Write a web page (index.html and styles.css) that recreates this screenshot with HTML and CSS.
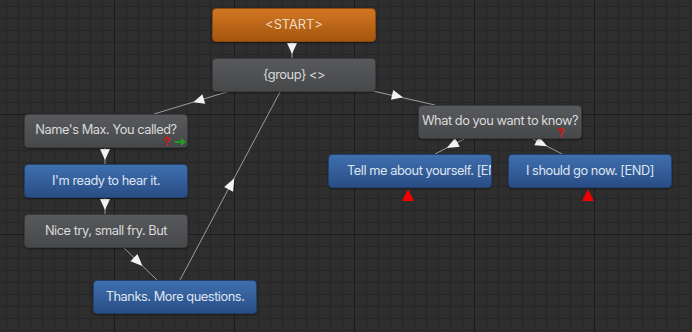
FILE: index.html
```html
<!DOCTYPE html>
<html>

<head>
     <title> Dialogue Graph </title>
     <link rel="stylesheet" href="styles.css">
</head>

<body>
     <div class="canvas">

          <!-- links between nodes, drawn under the nodes -->
          <svg class="links" width="692" height="332">
               <g class="wire">
                    <line x1="292" y1="42" x2="292" y2="58" />
                    <line x1="230" y1="91" x2="154" y2="114" />
                    <line x1="373" y1="91" x2="435" y2="105" />
                    <line x1="180" y1="280" x2="280" y2="92" />
                    <line x1="105" y1="148" x2="105" y2="164" />
                    <line x1="105" y1="198" x2="105" y2="214" />
                    <line x1="124" y1="248" x2="157" y2="280" />
                    <line x1="464" y1="139" x2="435" y2="154" />
                    <line x1="533" y1="139" x2="562" y2="154" />
               </g>
               <g class="arrow">
                    <polygon points="287,43 297,43 292,54" />
                    <polygon points="193.3,102.2 205.2,103.8 202.4,94.3" />
                    <polygon points="402.9,97.3 391,99.8 393.2,90" />
                    <polygon points="234.3,178.3 233.1,191.8 224.2,187.1" />
                    <polygon points="100,149 110,149 105,160" />
                    <polygon points="100,199 110,199 105,210" />
                    <polygon points="142.5,265.9 137.4,254 130.4,261.2" />
                    <polygon points="446.8,147.9 459.7,146.8 455.1,138" />
                    <polygon points="547.2,146.3 534.3,145.2 538.9,136.4" />
               </g>
               <g class="alert">
                    <polygon points="402,201 414,201 408,189" />
                    <polygon points="582,201 594,201 588,189" />
               </g>
          </svg>

          <div class="node start" style="left: 212px; top: 8px;">&lt;START&gt;</div>
          <div class="node group" style="left: 212px; top: 58px;">{group} &lt;&gt;</div>

          <div class="node npc marked" style="left: 24px; top: 114px;">
               Name's Max. You called?
               <span class="marks">
                    <span class="ask">?</span>
                    <svg class="go" width="11" height="8" viewBox="0 0 11 8">
                         <path d="M0 3h6V0l5 4-5 4V5H0z" />
                    </svg>
               </span>
          </div>
          <div class="node pc" style="left: 24px; top: 164px;">I'm ready to hear it.</div>
          <div class="node npc" style="left: 24px; top: 214px;">Nice try, small fry. But</div>
          <div class="node pc" style="left: 93px; top: 280px;">Thanks. More questions.</div>

          <div class="node npc marked" style="left: 418px; top: 105px;">
               What do you want to know?
               <span class="marks">
                    <span class="ask">?</span>
               </span>
          </div>
          <div class="node pc clip" style="left: 328px; top: 154px;">Tell me about yourself. [END]</div>
          <div class="node pc" style="left: 508px; top: 154px;">I should go now. [END]</div>

     </div>
</body>

</html>
```

FILE: styles.css
```css
body {
     margin: 0;
     background-color: #2d2d2d;
}

.canvas {
     position: relative;
     width: 692px;
     height: 332px;
     overflow: hidden;
     background-color: #2e2e2e;
     background-image:
          linear-gradient(to right, #1c1c1c 1px, transparent 1px),
          linear-gradient(to bottom, #1c1c1c 1px, transparent 1px),
          linear-gradient(to right, #262626 1px, transparent 1px),
          linear-gradient(to bottom, #262626 1px, transparent 1px);
     background-size: 120px 120px, 120px 120px, 12px 12px, 12px 12px;
     background-position: 114px 0, 0 114px, 6px 0, 0 6px;
}

svg.links {
     position: absolute;
     left: 0;
     top: 0;
}

.wire line {
     stroke: #9c9c9c;
     stroke-width: 1;
}

.arrow polygon {
     fill: #f2f2f2;
}

.alert polygon {
     fill: #f00000;
}

.node {
     position: absolute;
     width: 164px;
     height: 34px;
     box-sizing: border-box;
     padding: 0 12px 1px 12px;
     display: flex;
     align-items: center;
     justify-content: center;
     border-radius: 4px;
     border: 1px solid #2a2a2a;
     box-shadow: 0 1px 2px rgba(0, 0, 0, 0.45);
     font-family: Inter, "Noto Sans", sans-serif;
     font-size: 12.8px;
     letter-spacing: -0.45px;
     white-space: nowrap;
     overflow: hidden;
}

.start {
     background: linear-gradient(#d27722, #a5560e);
     border-color: #8a4a10;
     color: #eedbc6;
     letter-spacing: 0;
}

.group,
.npc {
     background: linear-gradient(#57595c, #46484a);
     border-color: #3a3b3d;
     color: #dadada;
}

.pc {
     background: linear-gradient(#3f6fae, #294d85);
     border-color: #23416f;
     color: #dde5f0;
}

.marked {
     padding-bottom: 4px;
}

.clip {
     justify-content: flex-start;
     padding-left: 18px;
}

.marks {
     position: absolute;
     left: 138px;
     top: 20px;
     display: flex;
     align-items: center;
     gap: 4px;
}

.ask {
     font-family: "Liberation Sans", sans-serif;
     font-weight: bold;
     font-size: 12.5px;
     letter-spacing: 0;
     color: #e01010;
}

.go {
     fill: #1fa01f;
}
```
